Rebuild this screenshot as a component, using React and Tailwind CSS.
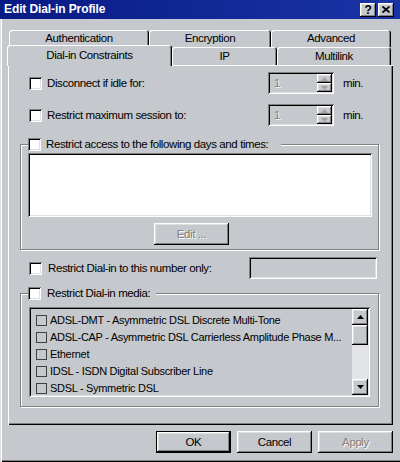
import React from "react";

const raised = "shadow-[inset_-1px_-1px_0_#000,inset_1px_1px_0_#fff,inset_-2px_-2px_0_#808080,inset_2px_2px_0_#dfdfdf]";
const sunken = "shadow-[inset_1px_1px_0_#808080,inset_-1px_-1px_0_#fff,inset_2px_2px_0_#000,inset_-2px_-2px_0_#dfdfdf]";
const dim = "text-[#808080] [text-shadow:1px_1px_0_#fff]";
const tabEdge = "shadow-[inset_1px_1px_0_#fff,inset_-1px_0_0_#000,inset_-2px_0_0_#808080]";

function Check() {
  return <span className={`block w-[13px] h-[13px] shrink-0 bg-white ${sunken}`} />;
}

function Arrow({ up, color = "#000" }) {
  return (
    <svg width="7" height="4" viewBox="0 0 7 4">
      <path d={up ? "M3.5 0L7 4H0Z" : "M0 0H7L3.5 4Z"} fill={color} />
    </svg>
  );
}

function Spin() {
  return (
    <div className={`w-[66px] h-[22px] flex items-center ${sunken}`}>
      <span className={`pl-[6px] ${dim}`}>1</span>
      <div className="ml-auto mr-[2px] flex flex-col w-[15px] h-[18px]">
        <div className={`flex-1 flex items-center justify-center ${raised}`}><Arrow up color="#a0a0a0" /></div>
        <div className={`flex-1 flex items-center justify-center ${raised}`}><Arrow color="#a0a0a0" /></div>
      </div>
    </div>
  );
}

function Tab({ label, w }) {
  return (
    <div className={`h-full flex items-center justify-center rounded-t-[3px] ${tabEdge}`} style={{ width: w }}>
      {label}
    </div>
  );
}

const media = [
  "ADSL-DMT - Asymmetric DSL Discrete Multi-Tone",
  "ADSL-CAP - Asymmetric DSL Carrierless Amplitude Phase M...",
  "Ethernet",
  "IDSL - ISDN Digital Subscriber Line",
  "SDSL - Symmetric DSL",
];

export default function App() {
  return (
    <div className="w-[400px] h-[462px] bg-[#c5c8cc] overflow-hidden font-['Liberation_Sans',Arial,sans-serif] text-[11.5px] leading-[13px] tracking-[-0.4px] text-black shadow-[inset_1px_0_0_#dfdfdf,inset_2px_0_0_#fff,inset_0_-1px_0_#000,inset_0_-2px_0_#808080]">
      {/* title bar */}
      <div className="h-[19px] flex items-center bg-gradient-to-r from-[#081a86] to-[#1a34a6] pl-[4px] pr-[6px]">
        <span className="text-white font-bold text-[12px] tracking-[-0.1px]">Edit Dial-in Profile</span>
        <div className="ml-auto flex gap-[2px]">
          <div className={`w-[16px] h-[14px] bg-[#c5c8cc] flex items-center justify-center font-bold text-[12px] leading-none ${raised}`}>?</div>
          <div className={`w-[16px] h-[14px] bg-[#c5c8cc] flex items-center justify-center ${raised}`}>
            <svg width="8" height="7" viewBox="0 0 8 7">
              <path d="M0.5 0.5L7.5 6.5M7.5 0.5L0.5 6.5" stroke="#000" strokeWidth="1.8" />
            </svg>
          </div>
        </div>
      </div>

      {/* tabs */}
      <div className="pt-[11px]">
        <div className="flex h-[17px] pl-[9px]">
          <Tab label="Authentication" w={140} />
          <Tab label="Encryption" w={122} />
          <Tab label="Advanced" w={120} />
        </div>
        <div className="flex items-start h-[18px] pl-[7px]">
          <div className={`relative z-10 -mt-[2px] h-[21px] w-[165px] bg-[#c5c8cc] flex items-center justify-center rounded-t-[3px] ${tabEdge}`}>
            Dial-in Constraints
          </div>
          <Tab label="IP" w={105} />
          <Tab label="Multilink" w={114} />
        </div>
      </div>

      {/* panel */}
      <div className="ml-[8px] w-[385px] h-[360px] flex flex-col pt-[7px] shadow-[inset_1px_1px_0_#fff,inset_-1px_-1px_0_#000,inset_-2px_-2px_0_#808080]">
        <div className="flex items-center h-[22px] pl-[21px]">
          <Check />
          <span className="ml-[5px] w-[221px]">Disconnect if idle for:</span>
          <Spin />
          <span className="ml-[9px]">min.</span>
        </div>
        <div className="flex items-center h-[22px] pl-[21px] mt-[10px]">
          <Check />
          <span className="ml-[5px] w-[221px]">Restrict maximum session to:</span>
          <Spin />
          <span className="ml-[9px]">min.</span>
        </div>

        {/* days and times group */}
        <div className="ml-[12px] mt-[18px] w-[359px] border border-[#808080] shadow-[inset_1px_1px_0_#fff,1px_1px_0_#fff] pb-[4px]">
          <div className="-mt-[7px] ml-[7px] w-fit flex items-center bg-[#c5c8cc] pr-[13px]">
            <Check />
            <span className="ml-[5px]">Restrict access to the following days and times:</span>
          </div>
          <div className={`ml-[7px] mt-[2px] w-[344px] h-[64px] bg-white ${sunken}`} />
          <div className={`ml-[133px] mt-[6px] w-[75px] h-[22px] flex items-center justify-center ${raised} ${dim}`}>
            Edit ...
          </div>
        </div>

        <div className="flex items-center h-[22px] pl-[21px] mt-[7px]">
          <Check />
          <span className="ml-[6px] w-[201px]">Restrict Dial-in to this number only:</span>
          <div className={`w-[128px] h-[22px] ${sunken}`} />
        </div>

        {/* media group */}
        <div className="ml-[12px] mt-[14px] w-[359px] border border-[#808080] shadow-[inset_1px_1px_0_#fff,1px_1px_0_#fff] pb-[9px]">
          <div className="-mt-[7px] ml-[7px] w-fit flex items-center bg-[#c5c8cc] pr-[6px]">
            <Check />
            <span className="ml-[6px]">Restrict Dial-in media:</span>
          </div>
          <div className={`ml-[8px] mt-[7px] w-[341px] h-[90px] p-[2px] flex ${sunken}`}>
            <div className="flex-1 min-w-0 overflow-hidden pt-[3px] pl-[5px] text-[11px] tracking-[-0.3px]">
              {media.map((m) => (
                <div key={m} className="h-[17px] flex items-center whitespace-nowrap">
                  <span className="block w-[11px] h-[11px] border border-[#404040] shrink-0" />
                  <span className="ml-[3px]">{m}</span>
                </div>
              ))}
            </div>
            <div className="w-[16px] shrink-0 flex flex-col">
              <div className={`h-[16px] bg-[#c5c8cc] flex items-center justify-center ${raised}`}><Arrow up /></div>
              <div className={`h-[20px] bg-[#c5c8cc] ${raised}`} />
              <div className="flex-1 bg-[#e2e4e7]" />
              <div className={`h-[16px] bg-[#c5c8cc] flex items-center justify-center ${raised}`}><Arrow /></div>
            </div>
          </div>
        </div>
      </div>

      {/* dialog buttons */}
      <div className="flex mt-[6px] pl-[156px] gap-[6px]">
        <div className="w-[75px] h-[22px] border border-black">
          <div className={`w-full h-full flex items-center justify-center ${raised}`}>OK</div>
        </div>
        <div className={`w-[75px] h-[22px] flex items-center justify-center ${raised}`}>Cancel</div>
        <div className={`w-[75px] h-[22px] flex items-center justify-center ${raised} ${dim}`}>Apply</div>
      </div>
    </div>
  );
}
